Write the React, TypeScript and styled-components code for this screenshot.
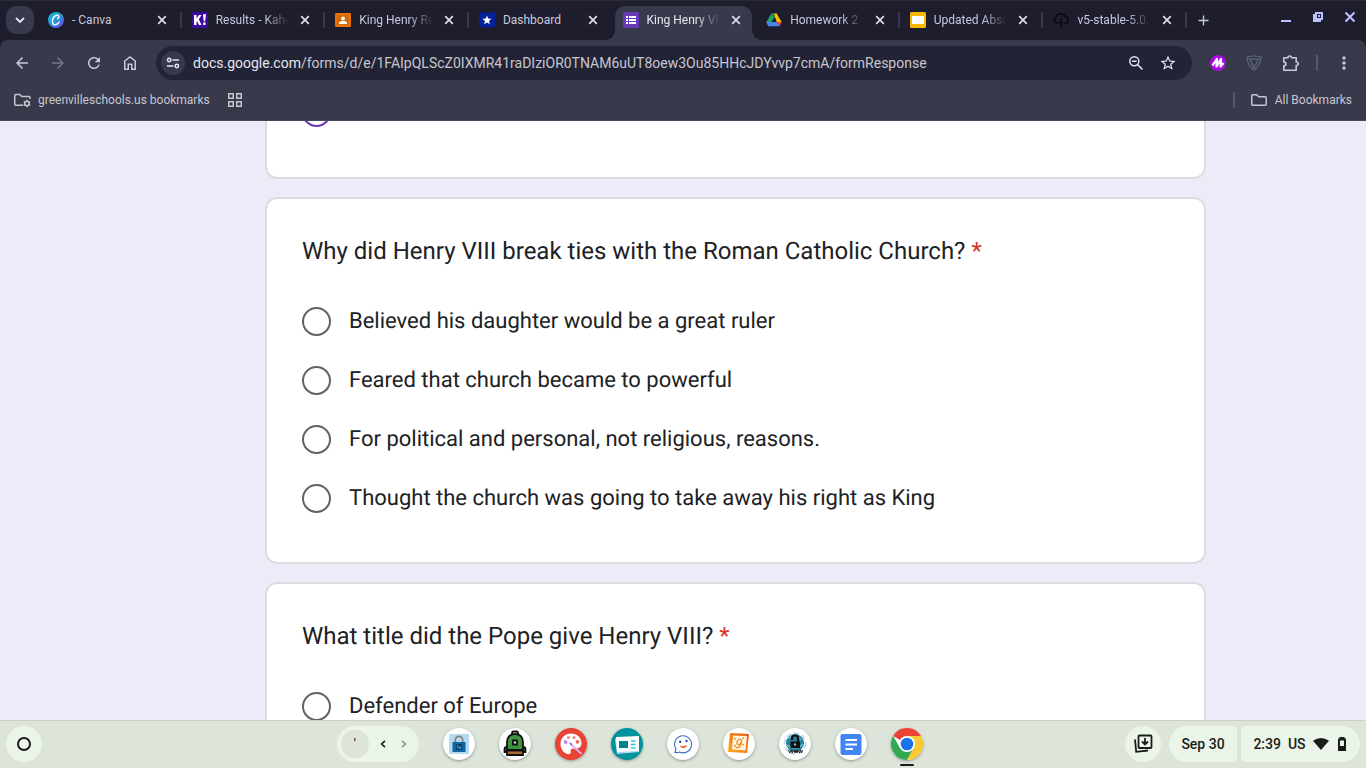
import React from "react";
import styled, { createGlobalStyle, css } from "styled-components";
import { MdAdd, MdArrowBack, MdArrowForward, MdClose, MdMoreVert, MdRefresh, MdStarBorder } from "react-icons/md";

const GlobalStyle = createGlobalStyle`
  * { box-sizing: border-box; }
  body { margin: 0; font-family: Roboto, "Liberation Sans", sans-serif; overflow: hidden; }
  button { border: 0; padding: 0; margin: 0; background: none; color: inherit; font: inherit; cursor: pointer; }
  svg { display: block; flex: none; }
`;

const Screen = styled.div`
  display: flex;
  flex-direction: column;
  height: 100vh;
  background: #1d1d2d;
`;

/* Browser tabs */

const TabStrip = styled.header`
  display: flex;
  flex: none;
  height: 40px;
  border-top: 1px solid #2b2c3b;
  background: #1d1d2d;
  color: #c8c9dc;
`;

const TabSearch = styled.button`
  display: grid;
  place-items: center;
  flex: none;
  width: 28px;
  height: 28px;
  margin: 5px 6px 0;
  border-radius: 10px;
  background: #383a4b;
  color: #e4e4f0;
`;

const Tabs = styled.nav`
  display: flex;
  flex: 0 1 1149px;
  min-width: 0;
  padding-top: 5px;
`;

const TabCell = styled.div<{ $divided: boolean }>`
  display: flex;
  flex: 1 1 0;
  min-width: 0;
  &::after {
    content: "";
    flex: none;
    width: 2px;
    height: 16px;
    margin: 6px 2px 0 2px;
    background: ${(p) => (p.$divided ? "#383a4b" : "transparent")};
  }
`;

const TabBody = styled.div<{ $active: boolean }>`
  position: relative;
  display: flex;
  flex: 1;
  align-items: center;
  gap: 8px;
  min-width: 0;
  height: 34px;
  padding: 0 8px 6px;
  border-radius: 10px 10px 0 0;
  ${(p) =>
    p.$active &&
    css`
      background: #383a4b;
      color: #e6e6f2;
      &::before,
      &::after {
        content: "";
        position: absolute;
        bottom: 0;
        width: 10px;
        height: 10px;
      }
      &::before {
        right: 100%;
        background: radial-gradient(circle at 0 0, transparent 10px, #383a4b 10px);
      }
      &::after {
        left: 100%;
        background: radial-gradient(circle at 100% 0, transparent 10px, #383a4b 10px);
      }
    `}
`;

const TabTitle = styled.a<{ $fade: boolean }>`
  flex: 1;
  min-width: 0;
  overflow: hidden;
  white-space: nowrap;
  color: inherit;
  text-decoration: none;
  font-size: 12px;
  line-height: 16px;
  ${(p) =>
    p.$fade &&
    css`
      mask-image: linear-gradient(to left, transparent, #000 24px);
    `}
`;

const TabClose = styled.button`
  display: grid;
  place-items: center;
  width: 16px;
  height: 16px;
  color: #dcdcec;
`;

const NewTab = styled.button`
  display: grid;
  place-items: center;
  width: 28px;
  height: 28px;
  margin-top: 5px;
`;

const WindowControls = styled.div`
  display: flex;
  gap: 4px;
  margin-left: auto;
  padding: 2px 2px 0 0;
  color: #bcc2ff;
`;

const WindowButton = styled.button`
  display: grid;
  place-items: center;
  width: 28px;
  height: 28px;
`;

/* Toolbar and bookmarks */

const Chrome = styled.div`
  flex: none;
  height: 81px;
  border-bottom: 1px solid #45475a;
  border-radius: 8px 8px 0 0;
  background: #383a4b;
  color: #c8c9dc;
`;

const Toolbar = styled.div`
  display: flex;
  align-items: center;
  gap: 8px;
  height: 46px;
  padding: 0 8px;
`;

const ToolButton = styled.button`
  display: grid;
  place-items: center;
  flex: none;
  width: 28px;
  height: 28px;
  &:disabled { color: #74768a; }
`;

const AddressBar = styled.form`
  display: flex;
  flex: 1;
  align-items: center;
  min-width: 0;
  height: 34px;
  margin: 0 4px;
  padding: 0 10px 0 5px;
  border-radius: 17px;
  background: #222436;
  font-size: 14px;
  line-height: 20px;
  color: #e6e6f0;
`;

const SiteInfo = styled.button`
  display: grid;
  place-items: center;
  flex: none;
  width: 24px;
  height: 24px;
  margin-right: 8px;
  border-radius: 50%;
  background: #383a4b;
`;

const AddressInput = styled.input`
  flex: 1;
  min-width: 0;
  padding: 0;
  border: 0;
  outline: 0;
  background: none;
  color: #c6c6cf;
  font: inherit;
`;

const AddressButton = styled(ToolButton)`
  margin-left: 4px;
`;

const Divider = styled.span<{ $gap: number }>`
  flex: none;
  width: 2px;
  height: 16px;
  margin: 0 ${(p) => p.$gap}px;
  background: #55576a;
`;

const Bookmarks = styled.div`
  display: flex;
  align-items: center;
  height: 28px;
  padding: 0 14px;
  color: #c6c6d0;
`;

const BookmarkButton = styled.button`
  display: flex;
  align-items: center;
  gap: 7px;
  font-size: 12px;
  line-height: 16px;
`;

const AppsButton = styled(BookmarkButton)`
  margin-left: 18px;
`;

const BookmarkEnd = styled.div`
  display: flex;
  align-items: center;
  margin-left: auto;
`;

/* Form */

const FormPage = styled.main`
  display: flex;
  flex: 1;
  flex-direction: column;
  gap: 18px;
  min-height: 0;
  overflow: hidden;
  padding: 0 160px 0 265px;
  background: #eeeaf8;
  text-rendering: geometricPrecision;
`;

const Card = styled.fieldset`
  flex: none;
  min-width: 0;
  margin: 0;
  padding: 34px 35px;
  border: 2px solid #dadce0;
  border-radius: 12px;
  background: #fff;
  color: #202124;
`;

const PreviousCard = styled(Card)`
  height: 58px;
  padding-top: 0;
  border-top: 0;
  border-radius: 0 0 12px 12px;
`;

const Question = styled.legend`
  float: left;
  width: 100%;
  padding: 0;
  margin-bottom: 23px;
  font-size: 24px;
  line-height: 36px;
`;

const Required = styled.span`
  color: #d93025;
`;

const Option = styled.label`
  clear: both;
  display: flex;
  align-items: center;
  gap: 18px;
  height: 59px;
  font-size: 22px;
  line-height: 30px;
`;

const Radio = styled.input<{ $accent?: boolean }>`
  appearance: none;
  flex: none;
  width: 29px;
  height: 29px;
  margin: 0;
  border: 2px solid ${(p) => (p.$accent ? "#673ab7" : "#5f6368")};
  border-radius: 50%;
  background: #fff;
`;

const ClippedRadio = styled(Radio)`
  display: block;
  margin-top: -23px;
`;

/* Shelf */

const Shelf = styled.footer`
  display: flex;
  flex: none;
  align-items: center;
  height: 48px;
  padding: 0 6px 1px;
  border-top: 1px solid #c9d0c6;
  background: #dde5da;
  color: #191d19;
`;

const RoundButton = styled.button`
  display: grid;
  place-items: center;
  flex: none;
  width: 36px;
  height: 36px;
  border-radius: 50%;
  background: #ebf4e8;
`;

const Dock = styled.div`
  display: flex;
  align-items: center;
  margin: 0 202px 0 auto;
`;

const InputPill = styled.div`
  display: flex;
  align-items: center;
  height: 36px;
  width: 82px;
  margin-right: 24px;
  padding: 0 5px 0 4px;
  border-radius: 18px;
  background: #ebf4e8;
`;

const KeyButton = styled.button`
  width: 28px;
  height: 28px;
  margin-right: 4px;
  border-radius: 50%;
  background: #dde5da;
  font-size: 12px;
  font-weight: 500;
  line-height: 28px;
`;

const ArrowButton = styled.button`
  display: grid;
  place-items: center;
  width: 21px;
  height: 28px;
  &:disabled { color: #8f958d; }
`;

const Apps = styled.div`
  display: flex;
  gap: 24px;
`;

const AppButton = styled.button<{ $color: string; $running?: boolean }>`
  position: relative;
  display: grid;
  place-items: center;
  width: 32px;
  height: 32px;
  border-radius: 50%;
  background: ${(p) => p.$color};
  box-shadow: 0 1px 3px rgba(0, 0, 0, 0.35);
  ${(p) =>
    p.$running &&
    css`
      &::after {
        content: "";
        position: absolute;
        left: 9px;
        bottom: -6px;
        width: 14px;
        height: 2px;
        border-radius: 1px;
        background: #191d19;
      }
    `}
`;

const Status = styled.div`
  display: flex;
  flex: none;
`;

const StatusPill = styled.button<{ $side: "left" | "right" }>`
  display: flex;
  align-items: center;
  justify-content: center;
  gap: 7px;
  height: 36px;
  width: ${(p) => (p.$side === "left" ? 68 : 119)}px;
  margin-left: ${(p) => (p.$side === "left" ? 8 : 4)}px;
  border-radius: ${(p) => (p.$side === "left" ? "18px 4px 4px 18px" : "4px 18px 18px 4px")};
  background: #ebf4e8;
  font-size: 14px;
  font-weight: 500;
  line-height: 20px;
`;

/* Favicons */

const CanvaIcon = () => (
  <svg width="16" height="16" viewBox="0 0 16 16">
    <defs>
      <linearGradient id="canva" x1="0" y1="0" x2="1" y2="1">
        <stop offset="0" stopColor="#05c3cf" />
        <stop offset=".5" stopColor="#2b9ad8" />
        <stop offset="1" stopColor="#7437e6" />
      </linearGradient>
    </defs>
    <circle cx="8" cy="8" r="8" fill="url(#canva)" />
    <path d="M9.700 6.700c1.300-.7 1.700-3.300-.3-3.500C6.700 3 4.400 6.300 4.400 9.200c0 2.300 1.200 3.500 2.900 3.500 1.700 0 3-1.100 3.800-2.500" fill="none" stroke="#fff" strokeWidth="1.400" strokeLinecap="round" />
  </svg>
);

const KahootIcon = () => (
  <svg width="16" height="16" viewBox="0 0 16 16">
    <path d="M0 0h16v16H0z" fill="#3b0a9e" />
    <path d="M2 3h2.500v3.500L6.900 3h2.700L6.800 7.300 9.600 13H7L5.200 9.300l-.7 1V13H2zM11 2.400l3-.5-.8 7.300h-1.500zM11.200 10.600l2.300-.3v2.700h-2.300z" fill="#fff" />
  </svg>
);

const ClassroomIcon = () => (
  <svg width="16" height="16" viewBox="0 0 16 16">
    <rect y="1" width="16" height="14" rx="1" fill="#e8710a" />
    <path d="M2 3h12v10H2z" fill="#d56a08" />
    <circle cx="8" cy="6.500" r="1.900" fill="#fff" />
    <path d="M4 12v-1c0-1.400 2.400-2 4-2s4 .6 4 2v1z" fill="#fff" />
  </svg>
);

const DashboardIcon = () => (
  <svg width="16" height="16" viewBox="0 0 16 16">
    <path d="M0 0l8 1 8-1v14.500L8 16l-8-1.500z" fill="#04209a" />
    <path d="M8 3.500l1.200 3.100 3.400.2-2.600 2.100.9 3.300L8 10.400l-2.900 1.800.9-3.300-2.600-2.100 3.400-.2z" fill="#fff" />
  </svg>
);

const FormsIcon = () => (
  <svg width="16" height="16" viewBox="0 0 16 16">
    <rect width="16" height="16" rx="1" fill="#673ab7" />
    <path d="M3 4h2v2H3zM6 4h7v2H6zM3 7h2v2H3zM6 7h7v2H6zM3 10h2v2H3zM6 10h7v2H6z" fill="#fff" />
  </svg>
);

const DriveIcon = () => (
  <svg width="16" height="16" viewBox="0 0 16 16">
    <path d="M5.300 1.400h2.900L9 5 3.600 14.400 1.300 12.300.4 10z" fill="#1ea362" />
    <path d="M5.300 1.400h5.200L8 6z" fill="#188038" />
    <path d="M7.900 1.400h2.800L15.600 10h-5z" fill="#fbbc04" />
    <path d="M.4 10h15.200l-2.200 4.300H2.500z" fill="#4285f4" />
    <path d="M10.900 10h4.700l-2.200 4.300z" fill="#ea4335" />
    <path d="M8 5.600L10.600 10H5.500z" fill="#1d1d2d" />
  </svg>
);

const SlidesIcon = () => (
  <svg width="16" height="16" viewBox="0 0 16 16">
    <rect width="16" height="16" rx="1.500" fill="#f9b800" />
    <path d="M2 4h12v8H2z" fill="#fff" />
  </svg>
);

const StormIcon = () => (
  <svg width="16" height="16" viewBox="0 0 16 16" fill="none" stroke="#08080d" strokeWidth="1.500" strokeLinejoin="round">
    <path d="M5.500 11H4.200A3.300 3.300 0 0 1 3.600 4.600 4.600 4.600 0 0 1 12 4.400a3.300 3.300 0 0 1 .2 6.600H11" />
    <path d="M9 6.500L6.500 10.500h3L7.500 15" />
  </svg>
);

/* Shelf app drawings */

const LockApp = () => (
  <svg width="32" height="32" viewBox="0 0 32 32">
    <path d="M6 6h20v20H6z" fill="#b5daf2" />
    <path d="M12.300 15v-3a3.700 3.700 0 0 1 7.400 0v3" fill="none" stroke="#7d8285" strokeWidth="1.700" />
    <path d="M9.500 14h13v10h-13z" fill="#0c65a5" />
    <path d="M13 16h6v6h-6z" fill="#123f63" />
    <path d="M14 17h1v2h2v-1h1v3h-2v-1h-2z" fill="#3d92cc" />
  </svg>
);

const BackpackApp = () => (
  <svg width="32" height="32" viewBox="0 0 32 32" stroke="#111" strokeWidth="1.800">
    <path d="M13 7V5a1.500 1.500 0 0 1 1.500-1.500h3A1.500 1.500 0 0 1 19 5v2" fill="none" />
    <path d="M8 19c-2 0-2.500 1-2.500 2.500V24H26.500v-2.500C26.500 20 26 19 24 19" fill="#3c8b3b" />
    <path d="M8 22v-8c0-4.800 3-8 8-8s8 3.200 8 8v8z" fill="#3c9440" />
    <path d="M8 22.500h16V27H8z" fill="#a9693a" />
    <path d="M14 12.500h4v4h-4z" fill="#e9e9e9" />
  </svg>
);

const PaletteApp = () => (
  <svg width="32" height="32" viewBox="0 0 32 32">
    <path d="M16 5.500C10 5.500 5.500 10 5.500 16c0 5 3.500 9.500 7.500 10.300 2.500.4 3-1.500 2.700-3.300-.2-1.700 1-2.700 2.800-2.300 3 .8 8-.7 8-5.200C26.500 9.500 22 5.500 16 5.500z" fill="#fff" />
    <circle cx="10.500" cy="14" r="1.900" fill="#c58af9" />
    <circle cx="13.500" cy="9.500" r="1.600" fill="#f08a80" />
    <circle cx="19" cy="9.500" r="1.600" fill="#f08a80" />
    <circle cx="22.500" cy="13.800" r="1.900" fill="#ee675c" />
    <path d="M16 16.500l10 9" stroke="#d7aefb" strokeWidth="1.800" strokeLinecap="round" />
    <path d="M14 14l3.500 2-1.300 1.500z" fill="#9334e6" />
  </svg>
);

const NewsApp = () => (
  <svg width="32" height="32" viewBox="0 0 32 32">
    <path d="M4 11l2-2h20l2 15-22 2z" fill="#a8d8f8" />
    <path d="M5 9l23-1v15l-22 1z" fill="#fff" />
    <path d="M8 13h9v7H8z" fill="#00838f" />
    <path d="M20 13h4.500M20 16.500h4.500M20 20h4.500" stroke="#26c6da" strokeWidth="1.700" />
  </svg>
);

const ChatFaceApp = () => (
  <svg width="32" height="32" viewBox="0 0 32 32">
    <path d="M8 24.500l1-3.500a8.500 8.500 0 1 1 3.500 3c-1.500.8-2.800.8-4.500.5z" fill="#fff" stroke="#3a6db5" strokeWidth="1.100" />
    <circle cx="13.200" cy="13.700" r="1.200" fill="#23579f" />
    <circle cx="19.500" cy="13" r="1.200" fill="#23579f" />
    <path d="M13 17.500c2 1 5 .8 7-.5-.3 2-1.800 3-3.500 3S13.500 19.300 13 17.500z" fill="#ee5b20" />
  </svg>
);

const SketchApp = () => (
  <svg width="32" height="32" viewBox="0 0 32 32">
    <defs>
      <linearGradient id="sketch" x1="0" y1="1" x2="1" y2="0">
        <stop offset="0" stopColor="#ffb018" />
        <stop offset="1" stopColor="#e94e10" />
      </linearGradient>
    </defs>
    <path d="M7 5l19 1-2 19-19-1z" fill="url(#sketch)" />
    <path d="M10 7.500l14 .5L22.500 22.500 9 21.500z" fill="#fff5df" />
    <path d="M18.500 11.500c-5-1-6 5-3 5 2 0 3-2.500 3.200-4.500-.2 5-2 8.500-6 7.500M11 10l2 1.500M21 9.500L19.500 11M11 18.500L13 17M21 17l-1.800-1" fill="none" stroke="#f18a1d" strokeWidth="1.300" />
  </svg>
);

const WebLockApp = () => (
  <svg width="32" height="32" viewBox="0 0 32 32">
    <circle cx="16" cy="15.500" r="10.500" fill="none" stroke="#b6d6e8" strokeWidth="1.500" strokeDasharray="5 3" />
    <circle cx="16" cy="15" r="9" fill="#277f9f" />
    <path d="M9 11c3-4 10-4 13 1M8 17c4 4 12 4 16-1" fill="none" stroke="#69b4cc" strokeWidth="1.500" />
    <path d="M13 12v-1.500a3 3 0 0 1 6 0V14" fill="none" stroke="#101010" strokeWidth="2.200" />
    <path d="M11.500 13.500h9.500V20h-9.500z" fill="#101010" />
    <circle cx="16" cy="16.500" r="1.200" fill="#86b8c8" />
    <path d="M9.500 22l1.200 3 1.300-3 1.300 3 1-3M15 22l1 3 1-3 1 3 1-3M19.500 22l1 3 1-3 1 3 1-3" fill="none" stroke="#222" strokeWidth="1" />
  </svg>
);

const DocsApp = () => (
  <svg width="32" height="32" viewBox="0 0 32 32">
    <rect x="5.500" y="6" width="21" height="21" rx="2" fill="#4285f4" />
    <path d="M10.500 12h11.500M10.500 16.500h11.500M10.500 21h7.500" stroke="#fff" strokeWidth="1.800" />
  </svg>
);

const ChromeApp = () => (
  <svg width="32" height="32" viewBox="0 0 32 32">
    <path d="M16 16L2.140 8a16 16 0 0 1 27.720 0z" fill="#ea4335" />
    <path d="M2.140 8l6.930 12 6.930 4v8A16 16 0 0 1 2.140 8z" fill="#34a853" />
    <path d="M22.930 20L16 32h-1.500L16 22z" fill="#34a853" />
    <path d="M22.930 20L16 32A16 16 0 0 0 29.860 8H16z" fill="#fbc934" />
    <circle cx="16" cy="16" r="8" fill="#fff" />
    <circle cx="16" cy="16" r="6.300" fill="#1a73e8" />
  </svg>
);

/* Toolbar drawings */

const Folder = ({ gear = false }: { gear?: boolean }) => (
  <svg width="17" height="16" viewBox="0 0 17 16" fill="none" stroke="currentColor" strokeWidth="1.500">
    {gear ? (
      <>
        <path d="M9 13.250H1.750a1 1 0 0 1-1-1V3.500a1 1 0 0 1 1-1h4l2 2H15a1 1 0 0 1 1 1V7" />
        <circle cx="13" cy="11.500" r="2.200" />
        <path d="M13 7.800v1.500M13 13.700v1.500M9.800 9.700l1.300.7M14.900 12.600l1.300.7M9.800 13.300l1.300-.7M14.900 10.400l1.300-.7" />
      </>
    ) : (
      <path d="M.75 12.250V3.750a1 1 0 0 1 1-1h4l2 2h6.500a1 1 0 0 1 1 1v6.500a1 1 0 0 1-1 1H1.750a1 1 0 0 1-1-1z" />
    )}
  </svg>
);

const tabs = [
  { title: "- Canva", icon: <CanvaIcon />, fade: false, divided: true },
  { title: "Results - Kaho", icon: <KahootIcon />, fade: true, divided: true },
  { title: "King Henry Re", icon: <ClassroomIcon />, fade: true, divided: true },
  { title: "Dashboard", icon: <DashboardIcon />, fade: false, divided: false },
  { title: "King Henry VI", icon: <FormsIcon />, fade: true, divided: false, active: true },
  { title: "Homework 2", icon: <DriveIcon />, fade: true, divided: true },
  { title: "Updated Abso", icon: <SlidesIcon />, fade: true, divided: true },
  { title: "v5-stable-5.0.", icon: <StormIcon />, fade: true, divided: true },
];

const questions = [
  {
    id: "church",
    text: "Why did Henry VIII break ties with the Roman Catholic Church?",
    options: [
      "Believed his daughter would be a great ruler",
      "Feared that church became to powerful",
      "For political and personal, not religious, reasons.",
      "Thought the church was going to take away his right as King",
    ],
  },
  { id: "title", text: "What title did the Pope give Henry VIII?", options: ["Defender of Europe"] },
];

const apps = [
  { name: "Lock", color: "#fff", icon: <LockApp /> },
  { name: "Backpack", color: "#fff", icon: <BackpackApp /> },
  { name: "Canvas", color: "#ea4335", icon: <PaletteApp /> },
  { name: "News", color: "#00939b", icon: <NewsApp /> },
  { name: "Chat", color: "#fff", icon: <ChatFaceApp /> },
  { name: "Sketch", color: "#fff", icon: <SketchApp /> },
  { name: "Web lock", color: "#fff", icon: <WebLockApp /> },
  { name: "Docs", color: "#fff", icon: <DocsApp /> },
  { name: "Chrome", color: "#fff", icon: <ChromeApp />, running: true },
];

export default function App() {
  return (
    <Screen>
      <GlobalStyle />
      <TabStrip>
        <TabSearch aria-label="Search tabs">
          <svg width="10" height="10" viewBox="0 0 10 10" fill="none" stroke="currentColor" strokeWidth="1.800">
            <path d="M1 3l4 4 4-4" />
          </svg>
        </TabSearch>
        <Tabs aria-label="Tabs">
          {tabs.map((tab) => (
            <TabCell key={tab.title} $divided={tab.divided}>
              <TabBody $active={!!tab.active}>
                {tab.icon}
                <TabTitle href="#" $fade={tab.fade}>{tab.title}</TabTitle>
                <TabClose aria-label={`Close ${tab.title}`}>
                  <svg width="10" height="10" viewBox="0 0 10 10" fill="none" stroke="currentColor" strokeWidth="1.700">
                    <path d="M1.200 1.200l7.600 7.600M8.800 1.200L1.200 8.800" />
                  </svg>
                </TabClose>
              </TabBody>
            </TabCell>
          ))}
        </Tabs>
        <NewTab aria-label="New tab">
          <MdAdd size={17} />
        </NewTab>
        <WindowControls>
          <WindowButton aria-label="Minimize">
            <svg width="12" height="12" viewBox="0 0 12 12"><path d="M1 9h10v2H1z" fill="currentColor" /></svg>
          </WindowButton>
          <WindowButton aria-label="Restore">
            <svg width="12" height="12" viewBox="0 0 12 12" fill="none" stroke="currentColor" strokeWidth="2">
              <path d="M4 2h6v6H4zM2 3v8M1 10h8" />
              <path d="M6 4h2v2H6z" fill="currentColor" stroke="none" />
            </svg>
          </WindowButton>
          <WindowButton aria-label="Close window">
            <svg width="12" height="12" viewBox="0 0 12 12" fill="none" stroke="currentColor" strokeWidth="2">
              <path d="M1.500 1.500l9 9M10.500 1.500l-9 9" />
            </svg>
          </WindowButton>
        </WindowControls>
      </TabStrip>

      <Chrome>
        <Toolbar>
          <ToolButton aria-label="Back"><MdArrowBack size={18} /></ToolButton>
          <ToolButton aria-label="Forward" disabled><MdArrowForward size={18} /></ToolButton>
          <ToolButton aria-label="Reload"><MdRefresh size={18} /></ToolButton>
          <ToolButton aria-label="Home">
            <svg width="14" height="16" viewBox="0 0 14 16" fill="none" stroke="currentColor" strokeWidth="1.500">
              <path d="M1.750 14.250V6L7 1.900 12.250 6v8.250h-3.500v-5h-3.500v5z" />
            </svg>
          </ToolButton>
          <AddressBar onSubmit={(e) => e.preventDefault()}>
            <SiteInfo type="button" aria-label="Site information">
              <svg width="14" height="14" viewBox="0 0 14 14" fill="none" stroke="currentColor" strokeWidth="1.500">
                <circle cx="3.200" cy="4" r="1.700" />
                <circle cx="10.800" cy="10" r="1.700" />
                <path d="M6.500 4H13M1 10h6.500" />
              </svg>
            </SiteInfo>
            <label htmlFor="address">docs.google.com</label>
            <AddressInput
              id="address"
              defaultValue="/forms/d/e/1FAIpQLScZ0IXMR41raDIziOR0TNAM6uUT8oew3Ou85HHcJDYvvp7cmA/formResponse"
            />
            <AddressButton type="button" aria-label="Zoom">
              <svg width="16" height="16" viewBox="0 0 16 16" fill="none" stroke="currentColor" strokeWidth="1.500">
                <circle cx="6.300" cy="6.300" r="4.500" />
                <path d="M9.500 9.500l5 5M4 6.300h4.600" />
              </svg>
            </AddressButton>
            <AddressButton type="button" aria-label="Bookmark this tab"><MdStarBorder size={18} /></AddressButton>
          </AddressBar>
          <ToolButton aria-label="M extension">
            <svg width="16" height="16" viewBox="0 0 16 16">
              <circle cx="8" cy="8" r="8" fill="#a80ce0" />
              <path d="M2.500 10.500L7 4l-.5 7.500L11 4l-.5 7.500L13.500 8" fill="none" stroke="#fff" strokeWidth="2.200" strokeLinejoin="round" />
            </svg>
          </ToolButton>
          <ToolButton aria-label="Shield extension">
            <svg width="16" height="16" viewBox="0 0 16 16" fill="none" stroke="#5c6577">
              <path d="M1 2q7-2 14 0-.5 9-7 13Q1.500 11 1 2z" strokeWidth="1.200" />
              <path d="M1.500 3L4 4.200h8.500L15 2.500M4 4.200L8 13M12.500 4.200L8 13v2" strokeWidth="1.200" />
            </svg>
          </ToolButton>
          <ToolButton aria-label="Extensions">
            <svg width="18" height="18" viewBox="0 0 18 18" fill="none" stroke="currentColor" strokeWidth="1.600">
              <path d="M2.800 3.800H7c0-2.500 3.500-2.500 3.500 0h4.700V8c2.700 0 2.700 3.500 0 3.500v4.700H2.800v-4.300c2.800 0 2.800-3.800 0-3.800z" strokeLinejoin="round" />
            </svg>
          </ToolButton>
          <Divider $gap={4} />
          <ToolButton aria-label="Browser menu"><MdMoreVert size={20} /></ToolButton>
        </Toolbar>
        <Bookmarks>
          <BookmarkButton>
            <Folder gear />
            greenvilleschools.us bookmarks
          </BookmarkButton>
          <AppsButton aria-label="Apps">
            <svg width="14" height="14" viewBox="0 0 14 14" fill="none" stroke="currentColor" strokeWidth="1.500">
              <path d="M.75.75h4.500v4.500H.75zM8.750.75h4.500v4.500h-4.500zM.75 8.750h4.500v4.500H.75zM8.750 8.750h4.500v4.500h-4.500z" />
            </svg>
          </AppsButton>
          <BookmarkEnd>
            <Divider $gap={16} />
            <BookmarkButton>
              <Folder />
              All Bookmarks
            </BookmarkButton>
          </BookmarkEnd>
        </Bookmarks>
      </Chrome>

      <FormPage>
        <PreviousCard>
          <ClippedRadio type="radio" name="previous" aria-label="Previous answer" $accent />
        </PreviousCard>
        {questions.map((question) => (
          <Card key={question.id}>
            <Question>
              {question.text} <Required>*</Required>
            </Question>
            {question.options.map((option) => (
              <Option key={option}>
                <Radio type="radio" name={question.id} />
                {option}
              </Option>
            ))}
          </Card>
        ))}
      </FormPage>

      <Shelf>
        <RoundButton aria-label="Launcher">
          <svg width="16" height="16" viewBox="0 0 16 16"><circle cx="8" cy="8" r="6" fill="none" stroke="currentColor" strokeWidth="2" /></svg>
        </RoundButton>
        <Dock>
          <InputPill>
            <KeyButton>'</KeyButton>
            <ArrowButton aria-label="Previous">
              <svg width="6" height="8" viewBox="0 0 6 8" fill="none" stroke="currentColor" strokeWidth="1.600"><path d="M5 .8L1.600 4 5 7.200" /></svg>
            </ArrowButton>
            <ArrowButton aria-label="Next" disabled>
              <svg width="6" height="8" viewBox="0 0 6 8" fill="none" stroke="currentColor" strokeWidth="1.600"><path d="M1 .8L4.400 4 1 7.200" /></svg>
            </ArrowButton>
          </InputPill>
          <Apps>
            {apps.map((app) => (
              <AppButton key={app.name} aria-label={app.name} $color={app.color} $running={app.running}>
                {app.icon}
              </AppButton>
            ))}
          </Apps>
        </Dock>
        <Status>
          <RoundButton aria-label="Downloads">
            <svg width="20" height="20" viewBox="0 0 20 20" fill="none" stroke="currentColor" strokeWidth="1.800">
              <rect x="5.500" y="1.500" width="13" height="12.500" rx="1" />
              <path d="M12 4v6M9 7.500l3 3 3-3M2 5.500l1.200 12.300L15 16.500" />
            </svg>
          </RoundButton>
          <StatusPill $side="left">Sep 30</StatusPill>
          <StatusPill $side="right">
            <span>2:39</span>
            <span>US</span>
            <svg width="16" height="12" viewBox="0 0 16 12"><path d="M0 2.800Q8-2.600 16 2.800L8 12z" fill="currentColor" /></svg>
            <svg width="12" height="14" viewBox="0 0 12 14">
              <path d="M3.500 0h5v1.500H10V14H2V1.500h1.500zM4 3.500V9h4V3.500z" fill="currentColor" fillRule="evenodd" />
            </svg>
          </StatusPill>
        </Status>
      </Shelf>
    </Screen>
  );
}
